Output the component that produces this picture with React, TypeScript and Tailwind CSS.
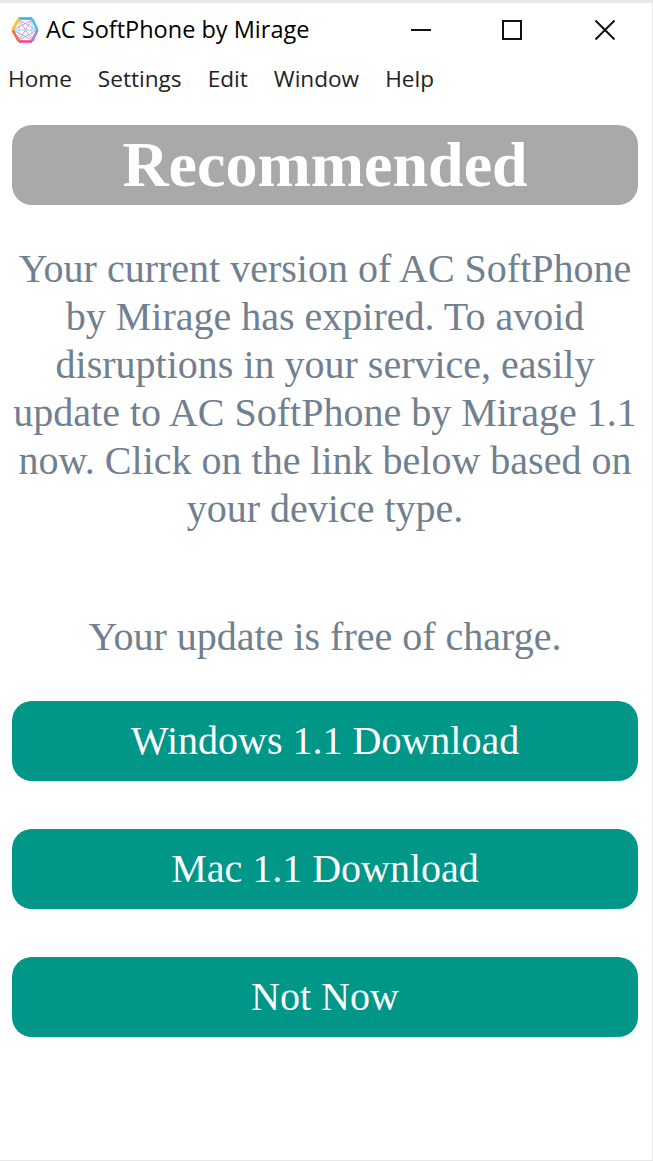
const menuItems = ["Home", "Settings", "Edit", "Window", "Help"];

const actions = ["Windows 1.1 Download", "Mac 1.1 Download", "Not Now"];

// Hexagon logo with the coloured rim and the crossing lines
const Logo = () => (
  <svg width="28" height="26" viewBox="0 0 28 26" fill="none">
    <path d="M8 3L21 23M21 3L8 23M2 13L21 3M2 13L21 23M26 13L8 3M26 13L8 23" stroke="#c3a0d8" strokeWidth="1" />
    <path d="M2 13H26M8 3V23M21 3V23" stroke="#8fd0ee" strokeWidth="1" />
    <path d="M8 1.5L21 1.5" stroke="#2fb5f0" strokeWidth="2.6" />
    <path d="M21 1.5L26.5 13" stroke="#45c4e6" strokeWidth="2.6" />
    <path d="M26.5 13L21 24.5" stroke="#b07ad2" strokeWidth="2.6" />
    <path d="M21 24.5L8 24.5" stroke="#f0488f" strokeWidth="2.6" />
    <path d="M8 24.5L1.5 13" stroke="#f96a45" strokeWidth="2.6" />
    <path d="M1.5 13L8 1.5" stroke="#fbc02d" strokeWidth="2.6" />
  </svg>
);

const TitleBar = () => (
  <div className="flex h-[54px] items-center pl-[11px]">
    <Logo />
    <span className="ml-[7px] font-['Open_Sans',sans-serif] text-[23.5px] text-black">AC SoftPhone by Mirage</span>
    <div className="ml-auto flex items-center pr-[37px]">
      <div className="h-[2px] w-[20px] bg-[#111]" />
      <div className="ml-[71px] h-[20px] w-[20px] border-2 border-[#111]" />
      <svg className="ml-[73px]" width="20" height="20" viewBox="0 0 20 20" fill="none">
        <path d="M0.5 0.5L19.5 19.5M19.5 0.5L0.5 19.5" stroke="#111" strokeWidth="2" />
      </svg>
    </div>
  </div>
);

export default function App() {
  return (
    <div className="flex h-[1161px] w-[653px] flex-col overflow-hidden border-t-[3px] border-r border-b border-[#e8e8e8] bg-white font-['Liberation_Serif',serif]">
      <TitleBar />

      <nav className="flex h-[44px] items-center gap-[26px] pl-[8px] font-['Open_Sans',sans-serif] text-[22.6px] text-[#222]">
        {menuItems.map((item) => (
          <span key={item}>{item}</span>
        ))}
      </nav>

      <main className="flex flex-col pl-[12px] pr-[14px] pt-[24px]">
        <div className="flex h-[80px] items-center justify-center rounded-[20px] bg-[#a9a9a9] text-[64px] font-bold text-white">
          Recommended
        </div>

        <p className="mt-[40px] text-center text-[40px] leading-[48px] text-[#708090]">
          Your current version of AC SoftPhone by Mirage has expired. To avoid disruptions in your service, easily update to AC SoftPhone by Mirage 1.1 now. Click on the link below based on your device type.
        </p>

        <p className="mt-[80px] text-center text-[40px] leading-[48px] text-[#708090]">Your update is free of charge.</p>

        <div className="mt-[40px] flex flex-col gap-[48px]">
          {actions.map((label) => (
            <button key={label} className="h-[80px] rounded-[20px] bg-[#009688] text-[40px] text-white">
              {label}
            </button>
          ))}
        </div>
      </main>
    </div>
  );
}
